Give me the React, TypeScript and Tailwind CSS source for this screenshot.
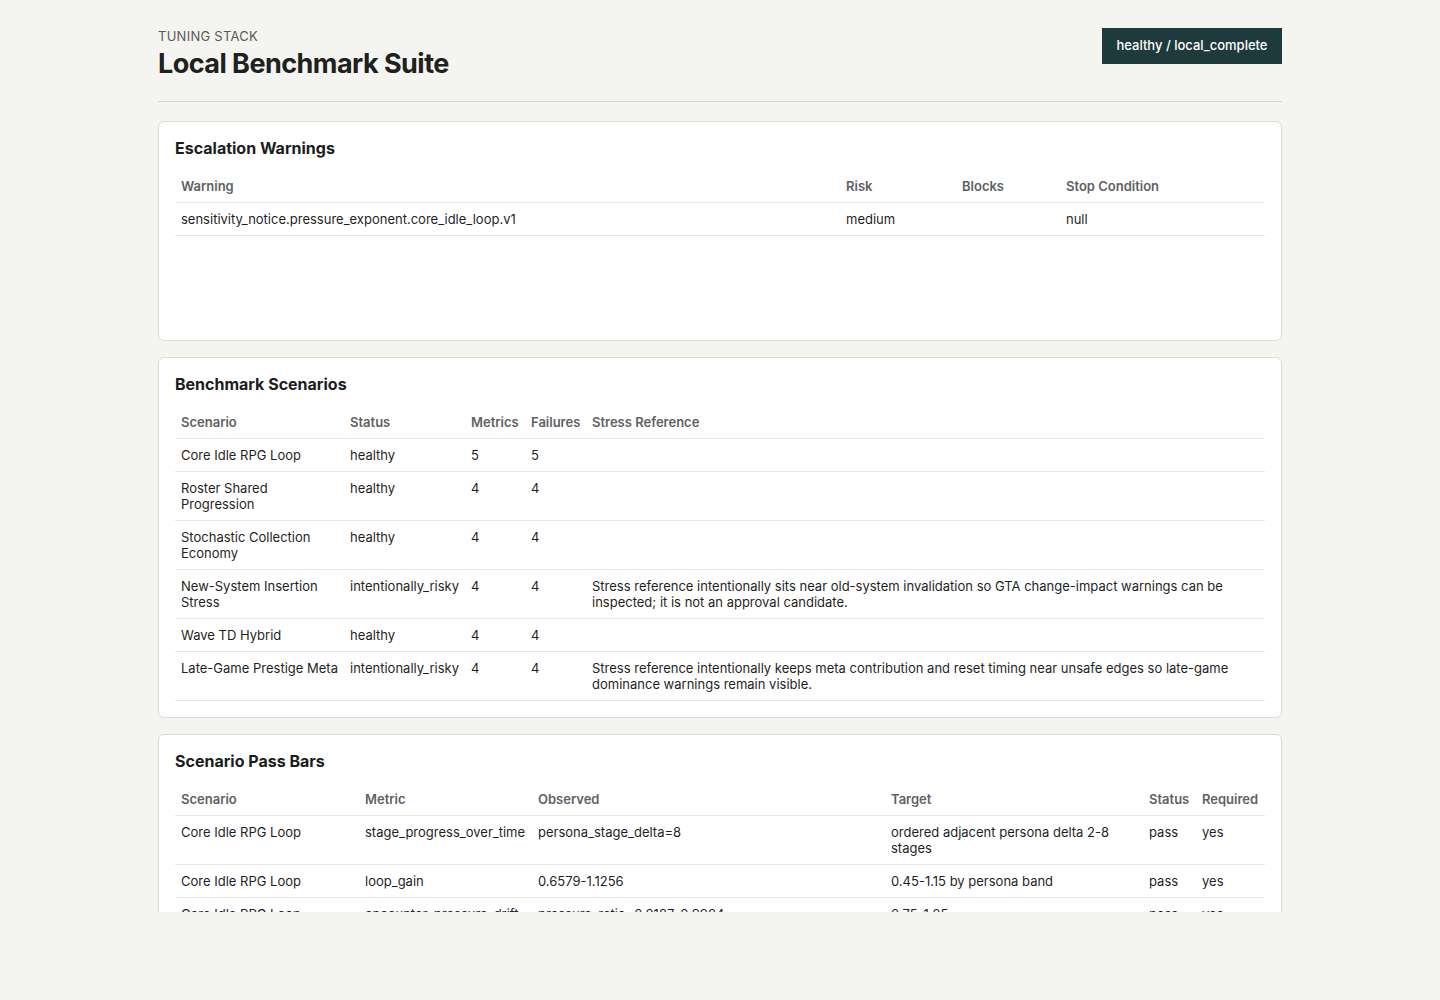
import React from "react";

type Col = { label: string; w?: string };

const warningCols: Col[] = [
  { label: "Warning", w: "w-[665px]" },
  { label: "Risk", w: "w-[116px]" },
  { label: "Blocks", w: "w-[104px]" },
  { label: "Stop Condition" },
];

const warningRows = [["sensitivity_notice.pressure_exponent.core_idle_loop.v1", "medium", "", "null"]];

const scenarioCols: Col[] = [
  { label: "Scenario", w: "w-[169px]" },
  { label: "Status", w: "w-[121px]" },
  { label: "Metrics", w: "w-[60px]" },
  { label: "Failures", w: "w-[61px]" },
  { label: "Stress Reference" },
];

// line breaks follow the wrapping in the design
const scenarioRows = [
  ["Core Idle RPG Loop", "healthy", "5", "5", ""],
  ["Roster Shared\nProgression", "healthy", "4", "4", ""],
  ["Stochastic Collection\nEconomy", "healthy", "4", "4", ""],
  [
    "New-System Insertion\nStress",
    "intentionally_risky",
    "4",
    "4",
    "Stress reference intentionally sits near old-system invalidation so GTA change-impact warnings can be\ninspected; it is not an approval candidate.",
  ],
  ["Wave TD Hybrid", "healthy", "4", "4", ""],
  [
    "Late-Game Prestige Meta",
    "intentionally_risky",
    "4",
    "4",
    "Stress reference intentionally keeps meta contribution and reset timing near unsafe edges so late-game\ndominance warnings remain visible.",
  ],
];

const passCols: Col[] = [
  { label: "Scenario", w: "w-[184px]" },
  { label: "Metric", w: "w-[173px]" },
  { label: "Observed", w: "w-[353px]" },
  { label: "Target", w: "w-[258px]" },
  { label: "Status", w: "w-[53px]" },
  { label: "Required" },
];

const passRows = [
  ["Core Idle RPG Loop", "stage_progress_over_time", "persona_stage_delta=8", "ordered adjacent persona delta 2-8\nstages", "pass", "yes"],
  ["Core Idle RPG Loop", "loop_gain", "0.6579-1.1256", "0.45-1.15 by persona band", "pass", "yes"],
  ["Core Idle RPG Loop", "encounter_pressure_drift", "pressure_ratio=0.8187-0.9984", "0.75-1.25", "pass", "yes"],
];

function DataTable({ cols, rows }: { cols: Col[]; rows: string[][] }) {
  return (
    <table className="w-full table-fixed border-collapse text-[13px] leading-4">
      <thead>
        <tr>
          {cols.map((c) => (
            <th
              key={c.label}
              className={`${c.w ?? ""} border-b border-[#e9e9e4] px-1.5 py-2 text-left font-semibold whitespace-nowrap text-[#5f6164]`}
            >
              {c.label}
            </th>
          ))}
        </tr>
      </thead>
      <tbody>
        {rows.map((r, i) => (
          <tr key={i}>
            {r.map((v, j) => (
              <td key={j} className="border-b border-[#e9e9e4] px-1.5 py-2 align-top whitespace-pre text-[#1f1f1f]">
                {v}
              </td>
            ))}
          </tr>
        ))}
      </tbody>
    </table>
  );
}

function Card({ title, children, className = "" }: { title: string; children: React.ReactNode; className?: string }) {
  return (
    <section className={`rounded-md border border-[#dcdcd5] bg-white p-4 ${className}`}>
      <h2 className="mb-3 text-[16px] leading-5 font-bold text-[#1c1c1c]">{title}</h2>
      {children}
    </section>
  );
}

export default function App() {
  return (
    <div
      className="min-h-screen bg-[#f4f4f0] text-[#1f1f1f]"
      style={{ fontFamily: 'Inter, "Liberation Sans", Arial, sans-serif' }}
    >
      <div className="mx-auto h-[912px] max-w-[1124px] overflow-hidden pt-7">
        <header className="flex items-start justify-between border-b border-[#d6d6d0] pb-5">
          <div>
            <div className="mb-[3px] text-[13px] leading-4 tracking-[0.02em] text-[#5a5a5a] uppercase">Tuning Stack</div>
            <h1 className="text-[27px] leading-[34px] font-bold tracking-[-0.02em] text-[#202020]">Local Benchmark Suite</h1>
          </div>
          <div className="flex h-9 w-[180px] items-center justify-center bg-[#1f3a3c] text-[13px] font-medium text-white">
            healthy / local_complete
          </div>
        </header>

        <div className="mt-[19px] flex flex-col gap-4">
          <Card title="Escalation Warnings" className="min-h-[220px]">
            <DataTable cols={warningCols} rows={warningRows} />
          </Card>
          <Card title="Benchmark Scenarios">
            <DataTable cols={scenarioCols} rows={scenarioRows} />
          </Card>
          <Card title="Scenario Pass Bars">
            <DataTable cols={passCols} rows={passRows} />
          </Card>
        </div>
      </div>
    </div>
  );
}
